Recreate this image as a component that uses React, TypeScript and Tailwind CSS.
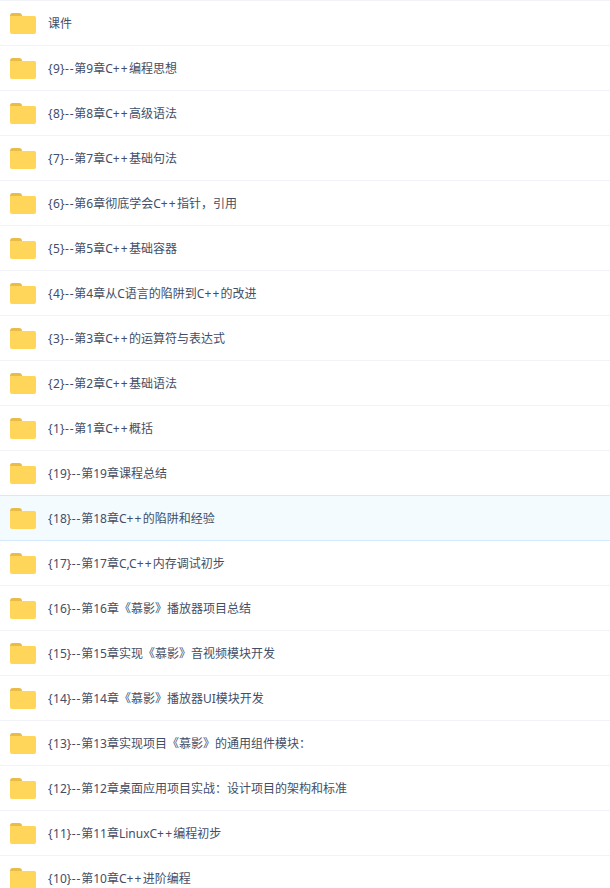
const rows = [
  "课件",
  "{9}--第9章C++编程思想",
  "{8}--第8章C++高级语法",
  "{7}--第7章C++基础句法",
  "{6}--第6章彻底学会C++指针，引用",
  "{5}--第5章C++基础容器",
  "{4}--第4章从C语言的陷阱到C++的改进",
  "{3}--第3章C++的运算符与表达式",
  "{2}--第2章C++基础语法",
  "{1}--第1章C++概括",
  "{19}--第19章课程总结",
  "{18}--第18章C++的陷阱和经验",
  "{17}--第17章C,C++内存调试初步",
  "{16}--第16章《慕影》播放器项目总结",
  "{15}--第15章实现《慕影》音视频模块开发",
  "{14}--第14章《慕影》播放器UI模块开发",
  "{13}--第13章实现项目《慕影》的通用组件模块：",
  "{12}--第12章桌面应用项目实战：设计项目的架构和标准",
  "{11}--第11章LinuxC++编程初步",
  "{10}--第10章C++进阶编程",
];

function FolderIcon() {
  return (
    <svg width="26" height="21" viewBox="0 0 26 21" className="shrink-0">
      <path d="M0 3 Q0 0 2.5 0 H9 Q12 0 12 3 V6 H0 Z" fill="#e9bb48" />
      <path d="M0 3 H24.5 Q26 3 26 4.5 V19 Q26 21 24 21 H2 Q0 21 0 19 Z" fill="#ffd659" />
    </svg>
  );
}

// the Latin font's punctuation is narrower than in the picture, so it gets spaced out
function FileName({ name }: { name: string }) {
  return (
    <span>
      {name.split(/(--|\+\+|[{}])/).map((part, i) => {
        if (part === "--") return <span key={i} className="tracking-[0.8px]">{part}</span>;
        if (part === "++") return <span key={i} className="tracking-[1.2px]">{part}</span>;
        if (part === "{" || part === "}") return <span key={i} className="tracking-[0.5px]">{part}</span>;
        return part;
      })}
    </span>
  );
}

export default function App() {
  return (
    <div className="h-[888px] overflow-hidden bg-white font-['Noto_Sans','Noto_Sans_CJK_SC',sans-serif] text-xs text-[#424e67]">
      <ul className="border-t border-[#f2f3f8]">
        {rows.map((name, i) => (
          <li
            key={name}
            className={
              i === 11
                ? "flex h-[46px] -mt-px items-center gap-3 border-y border-[#d5eafc] bg-[#f4fbff] pt-px pl-2.5"
                : "flex h-[45px] items-center gap-3 border-b border-[#f2f3f8] pt-px pl-2.5"
            }
          >
            <FolderIcon />
            <FileName name={name} />
          </li>
        ))}
      </ul>
    </div>
  );
}
